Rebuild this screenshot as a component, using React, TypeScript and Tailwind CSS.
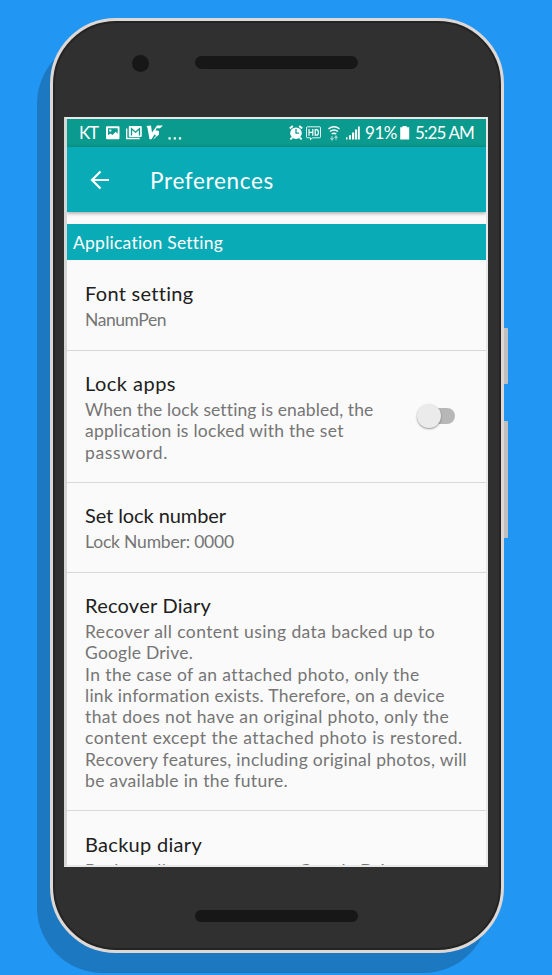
import { useLayoutEffect, useRef, useState } from "react";

/* A single line of text whose tracking is adjusted to fill a given width. */
function Line({ text, width, className = "" }: { text: string; width: number; className?: string }) {
  const ref = useRef<HTMLSpanElement>(null);
  const [tracking, setTracking] = useState(0);
  useLayoutEffect(() => {
    if (ref.current) {
      const natural = ref.current.getBoundingClientRect().width;
      setTracking((width - natural) / text.length);
    }
  }, [text, width]);
  return (
    <div className={`whitespace-nowrap ${className}`}>
      <span ref={ref} style={{ letterSpacing: tracking }}>
        {text}
      </span>
    </div>
  );
}

type Row = { text: string; width: number };

function Preference({ title, lines, className = "", children }: { title: Row; lines: Row[]; className?: string; children?: React.ReactNode }) {
  return (
    <section className={`flex shrink-0 items-center border-b border-[#d8d8d8] pl-[18px] pr-[31px] ${className}`}>
      <div className="flex-1 self-start pt-[19px]">
        <Line {...title} className="text-[20px] leading-[26px] text-[#202020]" />
        <div className="pt-[3px]">
          {lines.map((l) => (
            <Line key={l.text} {...l} className="text-[17.5px] leading-[21.25px] text-[#757575]" />
          ))}
        </div>
      </div>
      {children}
    </section>
  );
}

function StatusBar() {
  return (
    <div className="flex h-7 shrink-0 items-center bg-[#0a9b8e] pl-[12px] text-[17px] leading-7 text-white">
      <Line text="KT" width={19} className="w-[27px]" />
      <svg className="w-[80px] shrink-0" height="28" viewBox="0 0 80 28" fill="none">
        <path fill="#fff" fillRule="evenodd" d="M1 7.3h11.500a1 1 0 0 1 1 1v11a1 1 0 0 1-1 1H1a1 1 0 0 1-1-1v-11a1 1 0 0 1 1-1ZM2 9.300v7l2.500-1.800 2 1.500 3.200-3.300 2 2V9.300Z" />
        <path fill="#fff" d="M3.300 10.500h2v2h-2Z" />
        <path stroke="#fff" strokeWidth="1.300" d="M20.700 9.500v10h13" />
        <rect x="22.800" y="7" width="13" height="11" rx="1" fill="#fff" />
        <path stroke="#0a9b8e" strokeWidth="1.300" d="M25.500 16.500V9.700l4 3.500 4-3.500v6.800" />
        <path fill="#fff" d="m40.500 7 4.500-.5 1 7 5-7h6l-3 2.800h-3.500l-1 2 3.500.7v3.500L47 20.800l2-3.300h1.500l-1.800-2.200-3.200 5h-2L41.500 9Z" />
        <path fill="#fff" d="M62.500 18.300h2.200v2.200h-2.200ZM67.700 18.300h2.200v2.200h-2.200ZM72.900 18.300h2.200v2.200h-2.200Z" />
      </svg>
      <div className="flex-1" />
      <svg className="w-[76px] shrink-0" height="28" viewBox="0 0 76 28" fill="none">
        <circle cx="7" cy="14.200" r="5.800" fill="#fff" />
        <path stroke="#fff" strokeWidth="2" d="m.8 9.500 3-2.500M13.200 9.500l-3-2.500M3 18.500l-1.500 2M11 18.500l1.500 2" />
        <path stroke="#0a9b8e" strokeWidth="1.300" d="M7 10v4.200h3" />
        <path stroke="#fff" strokeWidth=".9" d="M18.500 7.800h12q1 0 1 1v9q0 1-1 1h-7l-2 2v-2h-3q-1 0-1-1v-9q0-1 1-1Z" />
        <path stroke="#fff" strokeWidth="1.200" d="M20 10v6.800M20 13.400h3.800M23.800 10v6.800M26.200 10.600h1q2.200 0 2.200 2.800t-2.200 2.800h-1Z" />
        <path stroke="#fff" strokeWidth="1.500" d="M39.500 9.800q5.500-4 11 0M41 12.500q4-3 8 0M42.700 15q2.300-1.600 4.600 0" />
        <path stroke="#9fd8d0" strokeWidth="1.100" d="M43 17v4m-1.500-2L43 21l1.500-2M47 21v-4m-1.500 2 1.500-2 1.500 2" />
        <path fill="#fff" d="M57 18.200h1.500v2.300H57ZM60 16.200h2v4.300h-2ZM63 13.500h2.200v7H63ZM66 10.500h2.200v10H66ZM69 7.500h1.800v13H69Z" />
      </svg>
      <Line text="91%" width={32} className="w-[35px]" />
      <svg className="w-[15px] shrink-0" height="28" viewBox="0 0 15 28">
        <path fill="#fff" d="M2.500 7h4.200v1.200H9.200v12.300H.2V8.200h2.300Z" />
      </svg>
      <Line text="5:25 AM" width={59} className="w-[71px]" />
    </div>
  );
}

function Screen() {
  return (
    <div className="mt-[96px] ml-[11px] flex h-[750px] w-[424px] flex-col overflow-hidden border-2 border-l-[3px] border-[#e8e8e8] border-l-[#d6d6d6] bg-[#fafafa]">
      <StatusBar />
      <header className="relative flex h-[65px] shrink-0 items-center bg-[#09abb6] pl-[23px] text-white shadow-[0_1px_4px_rgba(0,0,0,0.4)]">
        <svg className="mr-[40px]" width="20" height="20" viewBox="0 0 20 20" fill="none" stroke="#fff" strokeWidth="2.200">
          <path d="M19 10H2M10.500 1.500 2 10l8.500 8.500" />
        </svg>
        <Line text="Preferences" width={124} className="pt-[2px] text-[22.500px] leading-7" />
      </header>
      <h2 className="mt-[12px] h-9 shrink-0 bg-[#09abb6] pl-[6px] text-[17.500px] leading-[37px] text-white">
        <Line text="Application Setting" width={150} />
      </h2>
      <Preference className="h-[91px] pt-px" title={{ text: "Font setting", width: 108 }} lines={[{ text: "NanumPen", width: 81 }]} />
      <Preference
        className="h-[132px]"
        title={{ text: "Lock apps", width: 91 }}
        lines={[
          { text: "When the lock setting is enabled, the", width: 288 },
          { text: "application is locked with the set", width: 259 },
          { text: "password.", width: 83 },
        ]}
      >
        <div className="relative mb-[2px] h-4 w-[37px] rounded-full bg-[#b7b7b7]">
          <div className="absolute top-[-4px] left-[-1px] size-6 rounded-full bg-[#ebebeb] shadow-[0_1px_2px_rgba(0,0,0,0.4)]" />
        </div>
      </Preference>
      <Preference className="h-[90px]" title={{ text: "Set lock number", width: 141 }} lines={[{ text: "Lock Number: 0000", width: 149 }]} />
      <Preference
        className="h-[238px]"
        title={{ text: "Recover Diary", width: 126 }}
        lines={[
          { text: "Recover all content using data backed up to", width: 350 },
          { text: "Google Drive.", width: 108 },
          { text: "In the case of an attached photo, only the", width: 334 },
          { text: "link information exists. Therefore, on a device", width: 360 },
          { text: "that does not have an original photo, only the", width: 364 },
          { text: "content except the attached photo is restored.", width: 377 },
          { text: "Recovery features, including original photos, will", width: 382 },
          { text: "be available in the future.", width: 203 },
        ]}
      />
      <Preference className="h-[91px] pt-px" title={{ text: "Backup diary", width: 117 }} lines={[{ text: "Backup all your content to Google Drive.", width: 323 }]} />
    </div>
  );
}

export default function App() {
  return (
    <main className="relative h-[975px] w-[552px] overflow-hidden bg-[#2196f3] font-['Lato',sans-serif]">
      <div className="absolute top-[38px] left-[37px] h-[935px] w-[452px] rounded-[66px] bg-[#1c78c1]" />
      <div className="absolute top-[328px] left-[502px] h-14 w-[6px] rounded-r-[1px] bg-[#c2bfbd]" />
      <div className="absolute top-[421px] left-[502px] h-[117px] w-[6px] rounded-r-[1px] bg-[#c2bfbd]" />
      <div className="absolute top-[18px] left-[50px] h-[935px] w-[454px] rounded-[66px] border-[3.500px] border-[#ddd8d5] bg-[#303030] shadow-[inset_0_0_0_2px_#242424]">
        <div className="absolute top-[34px] left-[79px] size-[17px] rounded-full bg-[#171717]" />
        <div className="absolute top-[35px] left-[142px] h-[13px] w-[163px] rounded-full bg-[#171717]" />
        <div className="absolute top-[889px] left-[142px] h-[12px] w-[163px] rounded-full bg-[#171717]" />
        <Screen />
      </div>
    </main>
  );
}
